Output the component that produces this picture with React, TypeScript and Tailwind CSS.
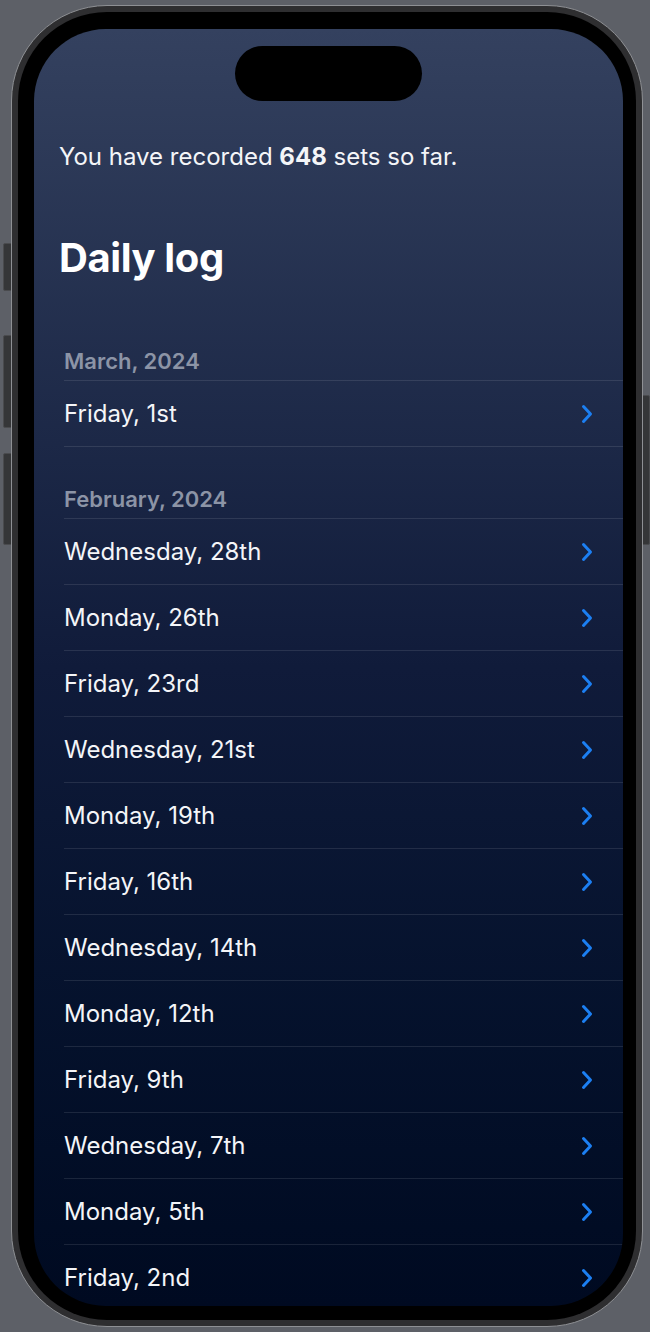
import { ChevronRight } from "lucide-react";

type Section = { title: string; days: string[] };

const sections: Section[] = [
  { title: "March, 2024", days: ["Friday, 1st"] },
  {
    title: "February, 2024",
    days: [
      "Wednesday, 28th",
      "Monday, 26th",
      "Friday, 23rd",
      "Wednesday, 21st",
      "Monday, 19th",
      "Friday, 16th",
      "Wednesday, 14th",
      "Monday, 12th",
      "Friday, 9th",
      "Wednesday, 7th",
      "Monday, 5th",
      "Friday, 2nd",
    ],
  },
];

function Chevron() {
  return (
    <svg width="12" height="20" viewBox="0 0 12 20" fill="none">
      <path
        d="M2.5 2.5 L9.5 10 L2.5 17.5"
        stroke="#1c7ff2"
        strokeWidth="3"
        strokeLinecap="round"
        strokeLinejoin="round"
      />
    </svg>
  );
}

function DayRow({ label }: { label: string }) {
  return (
    <div className="flex h-[66px] items-center justify-between border-b border-white/10 pr-[30px]">
      <span className="text-[24px] text-[#f4f5f8]">{label}</span>
      <Chevron />
    </div>
  );
}

export default function App() {
  return (
    <div
      className="relative h-[1332px] w-[650px] overflow-hidden bg-[#5d6067]"
      style={{ fontFamily: "Inter, 'Noto Sans', sans-serif" }}
    >
      {/* side buttons */}
      <div className="absolute left-[3px] top-[243px] h-[48px] w-[9px] rounded-l-[2px] bg-[#353638] border border-[#4a4b4e]" />
      <div className="absolute left-[3px] top-[335px] h-[93px] w-[9px] rounded-l-[2px] bg-[#353638] border border-[#4a4b4e]" />
      <div className="absolute left-[3px] top-[453px] h-[92px] w-[9px] rounded-l-[2px] bg-[#353638] border border-[#4a4b4e]" />
      <div className="absolute right-0 top-[395px] h-[150px] w-[8px] rounded-r-[2px] bg-[#353638] border border-[#4a4b4e]" />

      <div className="relative ml-[11px] mt-[5px] h-[1322px] w-[632px] rounded-[96px] border border-[#8e9094] bg-[#2e2e30] p-[6px]">
        <div className="flex h-full w-full rounded-[89px] bg-black pb-[14px] pl-[16px] pr-[13px] pt-[17px]">
          <div className="flex flex-1 flex-col overflow-hidden rounded-[72px] bg-gradient-to-b from-[#34415f] via-[#101b3a] to-[#000a21]">
            <div className="mx-auto mt-[17px] h-[55px] w-[187px] shrink-0 rounded-full bg-black" />

            <p className="ml-[25px] mt-[42px] text-[24px] leading-[28px] text-[#f4f5f8]">
              You have recorded <span className="font-bold">648</span> sets so far.
            </p>

            <h1 className="ml-[25px] mt-[64px] text-[40px] font-bold leading-[46px] tracking-[-0.4px] text-white">
              Daily log
            </h1>

            <div className="ml-[30px] mt-[67px]">
              {sections.map((s, i) => (
                <div key={s.title} className={i === 0 ? "" : "mt-[39px]"}>
                  <div className="mb-[6px] text-[22px] font-semibold leading-[26px] text-[#8c94a6]">
                    {s.title}
                  </div>
                  <div className="border-t border-white/10">
                    {s.days.map((d) => (
                      <DayRow key={d} label={d} />
                    ))}
                  </div>
                </div>
              ))}
            </div>
          </div>
        </div>
      </div>
    </div>
  );
}
